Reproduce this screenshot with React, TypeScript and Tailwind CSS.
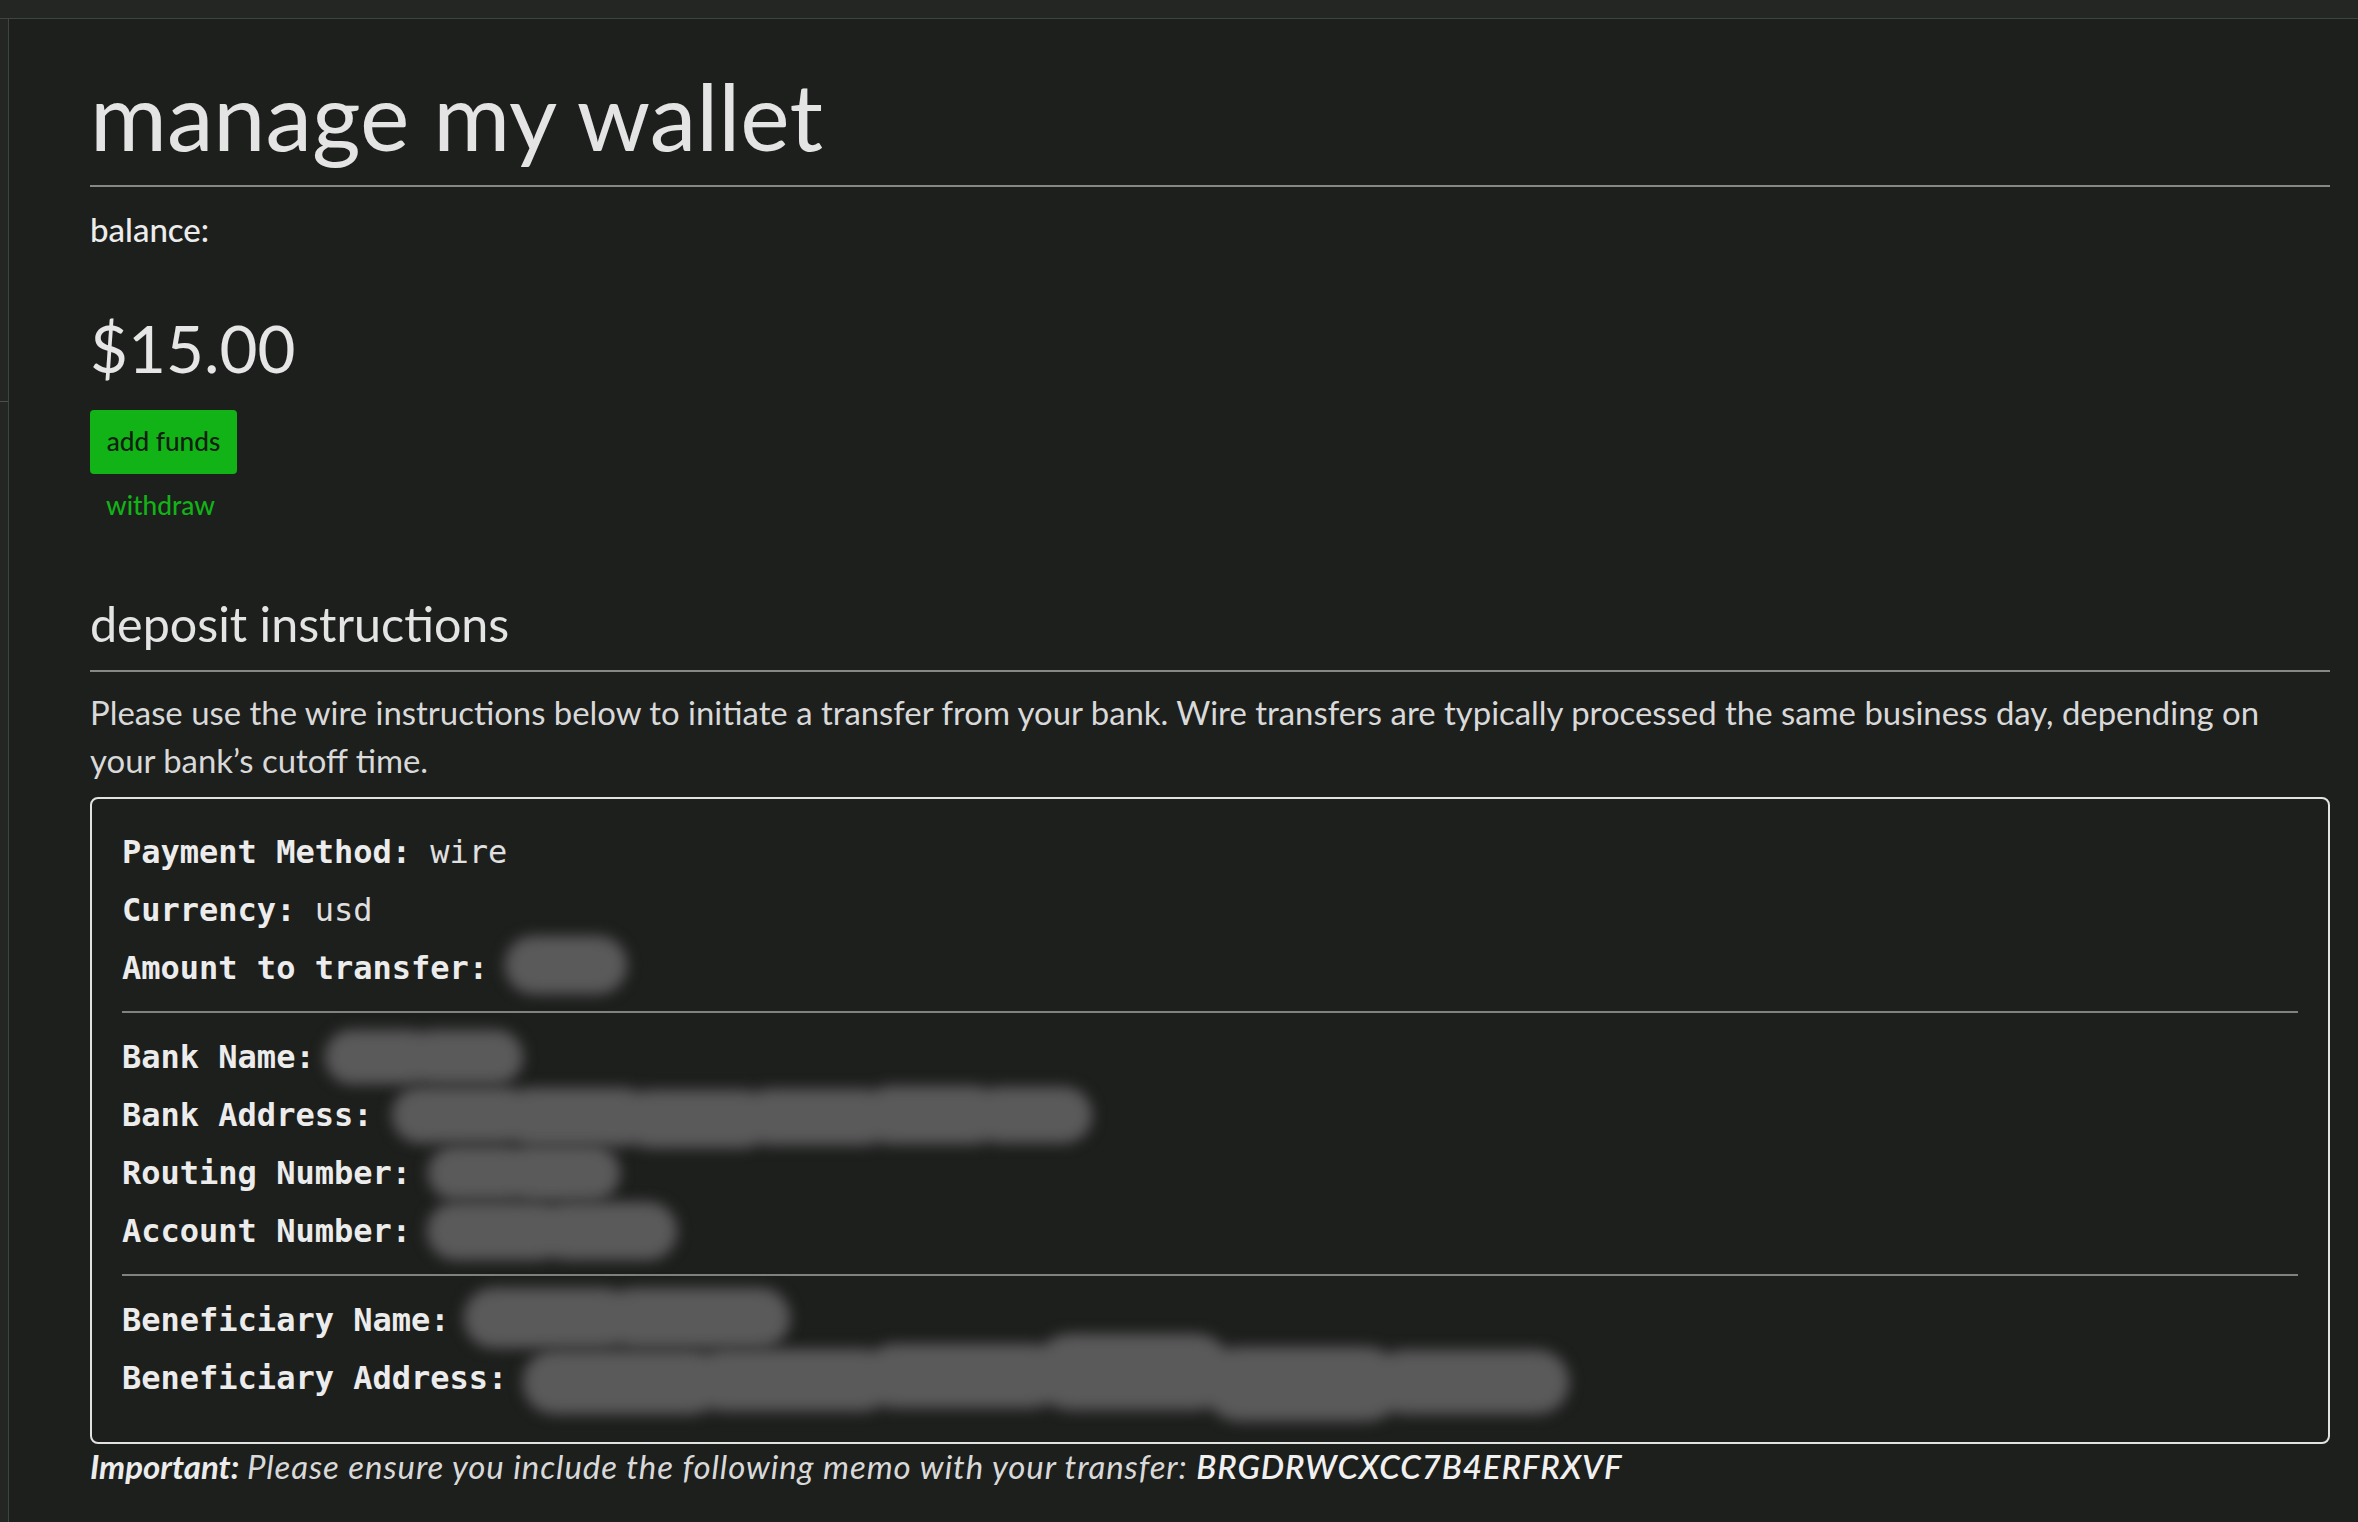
type Blob = { w: number; h: number; dy?: number };

// Redacted value: overlapping soft grey lumps standing in for hidden text.
function Redacted({ parts, className = "" }: { parts: Blob[]; className?: string }) {
  return (
    <span className={`inline-flex h-[58px] items-center align-top blur-[7px] ${className}`}>
      {parts.map((p, i) => (
        <span
          key={i}
          className="block shrink-0 rounded-full bg-[#5a5a5a]"
          style={{
            width: p.w,
            height: p.h,
            transform: `translateY(${p.dy ?? 0}px)`,
            marginLeft: i === 0 ? 0 : -30,
          }}
        />
      ))}
    </span>
  );
}

function Row({ label, children }: { label: string; children: React.ReactNode }) {
  return (
    <div className="h-[58px] leading-[58px] whitespace-nowrap">
      <span className="font-bold text-[#ececec]">{label}</span>{" "}
      {children}
    </div>
  );
}

function Rule() {
  return <div className="mt-[14px] mb-[15px] h-[2px] bg-[#7f827e]" />;
}

export default function App() {
  return (
    <div className="min-h-[1522px] w-full bg-[#1d1f1d] text-[#e2e2e2] font-['Lato',sans-serif] flex flex-col">
      {/* window chrome */}
      <div className="h-[19px] shrink-0 bg-[#242624] border-b border-[#3c463c]" />
      <div className="flex flex-1">
        <div className="w-[9px] shrink-0 bg-[#242624] border-r border-[#3c463c] flex flex-col">
          <div className="h-[383px] border-b border-[#4a4f4a]" />
        </div>

        <main className="flex-1 pl-[81px] pr-[28px]">
          <h1 className="mt-[50px] text-[93.5px] leading-[93.5px] font-normal text-[#e4e4e4]">manage my wallet</h1>
          <div className="mt-[22px] h-[2px] bg-[#858885]" />

          <div className="mt-[26.5px] text-[33px] leading-[33px] font-medium text-[#ececec]">balance:</div>

          <div className="mt-[69px] text-[65.5px] leading-[65.5px] text-[#e6e6e6]">$15.00</div>

          <button className="mt-[29px] h-[64px] w-[147px] rounded-[4px] bg-[#12b316] text-[26.2px] font-medium text-[#132013] flex items-center justify-center">
            add funds
          </button>

          <div className="mt-[18px] pl-[16px] text-[26.2px] leading-[26.2px] font-medium text-[#12b316]">withdraw</div>

          <h2 className="mt-[81px] text-[48.4px] leading-[48.4px] font-normal text-[#e4e4e4]">deposit instructions</h2>
          <div className="mt-[22.5px] h-[2px] bg-[#858885]" />

          <p className="mt-[17px] text-[32.9px] leading-[48.5px] text-[#d9d9d9]">
            Please use the wire instructions below to initiate a transfer from your bank. Wire transfers are typically
            processed the same business day, depending on your bank’s cutoff time.
          </p>

          <div className="mt-[11px] rounded-[8px] border-2 border-[#e2e2e2] px-[30px] pt-[24px] pb-[35px] font-['DejaVu_Sans_Mono',monospace] text-[32px] text-[#e0e0e0]">
            <Row label="Payment Method:">wire</Row>
            <Row label="Currency:">usd</Row>
            <Row label="Amount to transfer:">
              <Redacted parts={[{ w: 122, h: 58, dy: -3 }]} className="-ml-[2px]" />
            </Row>
            <Rule />
            <Row label="Bank Name:">
              <Redacted parts={[{ w: 112, h: 54 }, { w: 116, h: 54 }]} className="-ml-[9px]" />
            </Row>
            <Row label="Bank Address:">
              <Redacted
                parts={[
                  { w: 140, h: 56 },
                  { w: 150, h: 58, dy: 2 },
                  { w: 150, h: 58, dy: 4 },
                  { w: 150, h: 56, dy: 2 },
                  { w: 140, h: 58 },
                  { w: 120, h: 56 },
                ]}
              />
            </Row>
            <Row label="Routing Number:">
              <Redacted parts={[{ w: 104, h: 54 }, { w: 118, h: 56 }]} className="-ml-[2px]" />
            </Row>
            <Row label="Account Number:">
              <Redacted parts={[{ w: 140, h: 58 }, { w: 140, h: 58 }]} className="-ml-[3px]" />
            </Row>
            <Rule />
            <Row label="Beneficiary Name:">
              <Redacted parts={[{ w: 170, h: 60, dy: -2 }, { w: 186, h: 60, dy: -2 }]} className="-ml-[5px]" />
            </Row>
            <Row label="Beneficiary Address:">
              <Redacted
                parts={[
                  { w: 200, h: 64, dy: 4 },
                  { w: 200, h: 62, dy: 2 },
                  { w: 200, h: 64, dy: -2 },
                  { w: 200, h: 76, dy: -6 },
                  { w: 200, h: 74, dy: 6 },
                  { w: 196, h: 64, dy: 4 },
                ]}
                className="-ml-[4px]"
              />
            </Row>
          </div>

          <p className="mt-[2px] text-[33px] leading-[40px] italic text-[#d9d9d9] whitespace-nowrap">
            <span className="font-bold text-[#ececec]">Important:</span>{" "}
            <span className="tracking-[0.9px]">
              Please ensure you include the following memo with your transfer:{" "}
              <span className="font-semibold text-[#f0f0f0]">BRGDRWCXCC7B4ERFRXVF</span>
            </span>
          </p>
        </main>
      </div>
    </div>
  );
}
